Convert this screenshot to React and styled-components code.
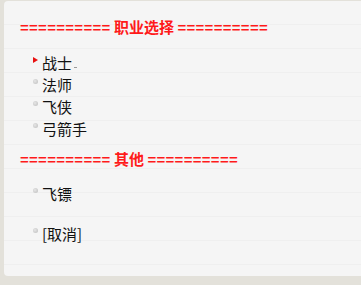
import React from "react";
import styled, { createGlobalStyle } from "styled-components";

const GlobalStyle = createGlobalStyle`
  html, body {
    margin: 0;
    padding: 0;
    background: #e3e1da;
  }
  body {
    font-family: "Noto Sans CJK SC", "Liberation Sans", sans-serif;
  }
`;

const StyledPanel = styled.div`
  margin: 1px 0 0 4px;
  height: 275px;
  box-sizing: border-box;
  padding: 15px 0 0 16px;
  background-color: #f5f5f5;
  background-image: repeating-linear-gradient(
    to bottom,
    transparent 0px,
    transparent 23px,
    #efefef 23px,
    #efefef 24px
  );
  border-radius: 4px 0 0 4px;
`;

const StyledHeader = styled.div`
  color: #ff1a1a;
  font-weight: 700;
  font-size: 15px;
  line-height: 22px;
  white-space: nowrap;
  margin-top: ${(p) => p.$top || 0}px;
`;

const StyledEquals = styled.span`
  font-family: "Liberation Sans", sans-serif;
  font-weight: 700;
  font-size: 15px;
  letter-spacing: 0.3px;
`;

const StyledList = styled.ul`
  list-style: none;
  margin: ${(p) => p.$top || 0}px 0 0;
  padding: 0 0 0 13px;
`;

const StyledItem = styled.li`
  display: flex;
  align-items: center;
  gap: 4px;
  height: 22px;
  font-size: 15px;
  color: #111;
  margin-top: ${(p) => p.$top || 0}px;
`;

const StyledDot = styled.span`
  width: 5px;
  height: 5px;
  margin-top: -5px;
  border-radius: 50%;
  background: radial-gradient(circle at 40% 40%, #e6e6e6, #bcbcbc);
`;

const StyledArrow = styled.span`
  width: 0;
  height: 0;
  margin-top: -5px;
  border-top: 3.5px solid transparent;
  border-bottom: 3.5px solid transparent;
  border-left: 5px solid #e81010;
`;

const StyledCursor = styled.span`
  align-self: flex-end;
  margin: 0 0 5px -2px;
  width: 3px;
  height: 1px;
  background: #9a9a9a;
`;

function Header({ title, top }) {
  return (
    <StyledHeader $top={top}>
      <StyledEquals>==========</StyledEquals> {title}{" "}
      <StyledEquals>==========</StyledEquals>
    </StyledHeader>
  );
}

export default function App() {
  return (
    <>
      <GlobalStyle />
      <StyledPanel>
        <Header title="职业选择" />
        <StyledList $top={12}>
          <StyledItem>
            <StyledArrow />
            战士
            <StyledCursor />
          </StyledItem>
          <StyledItem>
            <StyledDot />
            法师
          </StyledItem>
          <StyledItem>
            <StyledDot />
            飞侠
          </StyledItem>
          <StyledItem>
            <StyledDot />
            弓箭手
          </StyledItem>
        </StyledList>
        <Header title="其他" top={9} />
        <StyledList $top={11}>
          <StyledItem>
            <StyledDot />
            飞镖
          </StyledItem>
          <StyledItem $top={18}>
            <StyledDot />
            [取消]
          </StyledItem>
        </StyledList>
      </StyledPanel>
    </>
  );
}
